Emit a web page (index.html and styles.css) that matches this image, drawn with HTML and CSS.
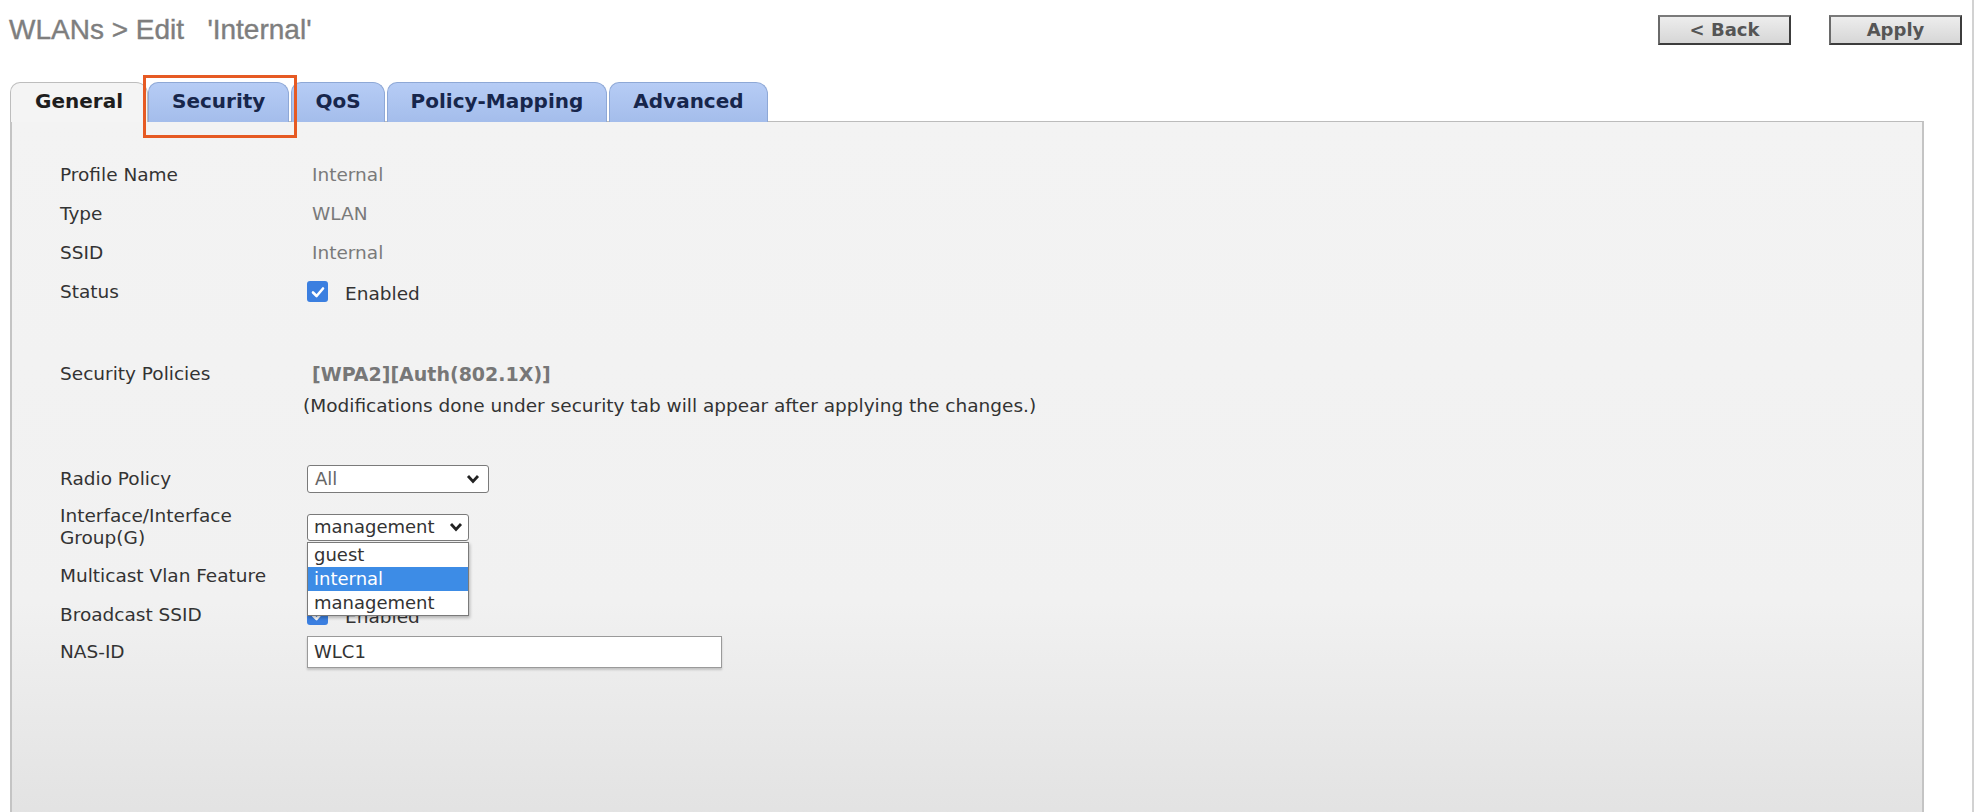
FILE: index.html
```html
<!DOCTYPE html>
<html lang="en">
<head>
<meta charset="utf-8">
<title>WLANs &gt; Edit 'Internal'</title>
<link rel="stylesheet" href="styles.css">
</head>
<body>
<div class="frame">
  <header class="topbar">
    <h1 class="title">WLANs &gt; Edit&nbsp;&nbsp; 'Internal'</h1>
    <div class="actions">
      <button class="btn" type="button">&lt; Back</button>
      <button class="btn" type="button">Apply</button>
    </div>
  </header>

  <nav class="tabs">
    <div class="tab tab-active">General</div>
    <div class="tab">Security</div>
    <div class="tab">QoS</div>
    <div class="tab">Policy-Mapping</div>
    <div class="tab">Advanced</div>
  </nav>
  <div class="highlight"></div>

  <section class="panel">
    <div class="form">
      <div class="row"><div class="label">Profile Name</div><div class="value text-value">Internal</div></div>
      <div class="row"><div class="label">Type</div><div class="value text-value">WLAN</div></div>
      <div class="row"><div class="label">SSID</div><div class="value text-value">Internal</div></div>
      <div class="row"><div class="label">Status</div>
        <div class="value check-wrap"><span class="checkbox"><svg viewBox="0 0 20 20" width="20" height="20"><path d="M5 10.5 L8.6 14 L15 6.5" fill="none" stroke="#fff" stroke-width="2.6" stroke-linecap="round" stroke-linejoin="round"/></svg></span><span class="check-text">Enabled</span></div>
      </div>

      <div class="row row-sec"><div class="label">Security Policies</div><div class="value policy">[WPA2][Auth(802.1X)]</div></div>
      <div class="note">(Modifications done under security tab will appear after applying the changes.)</div>

      <div class="row row-radio"><div class="label">Radio Policy</div>
        <div class="value"><div class="select select-radio"><span class="sel-text muted">All</span><svg class="chev" viewBox="0 0 14 10" width="14" height="10"><path d="M2 2 L7 7.5 L12 2" fill="none" stroke="#222" stroke-width="2.8"/></svg></div></div>
      </div>
      <div class="row row-iface"><div class="label label-two">Interface/Interface<br>Group(G)</div>
        <div class="value">
          <div class="select-holder">
            <div class="select select-iface"><span class="sel-text">management</span><svg class="chev" viewBox="0 0 14 10" width="14" height="10"><path d="M2 2 L7 7.5 L12 2" fill="none" stroke="#222" stroke-width="2.8"/></svg></div>
            <ul class="listbox">
              <li class="opt">guest</li>
              <li class="opt opt-sel">internal</li>
              <li class="opt">management</li>
            </ul>
          </div>
        </div>
      </div>
      <div class="row"><div class="label">Multicast Vlan Feature</div>
        <div class="value check-wrap"><span class="checkbox checkbox-off"></span></div>
      </div>
      <div class="row"><div class="label">Broadcast SSID</div>
        <div class="value check-wrap"><span class="checkbox"><svg viewBox="0 0 20 20" width="20" height="20"><path d="M5 10.5 L8.6 14 L15 6.5" fill="none" stroke="#fff" stroke-width="2.6" stroke-linecap="round" stroke-linejoin="round"/></svg></span><span class="check-text">Enabled</span></div>
      </div>
      <div class="row row-nas"><div class="label">NAS-ID</div>
        <div class="value"><div class="textbox">WLC1</div></div>
      </div>
    </div>
  </section>
</div>
</body>
</html>
```

FILE: styles.css
```css
html, body {
  margin: 0;
  padding: 0;
  background: #ffffff;
  overflow: hidden;
}

.frame {
  position: relative;
  width: 1974px;
  height: 812px;
  box-sizing: border-box;
  border-right: 2px solid #d2d2d2;
  font-family: "DejaVu Sans", Verdana, sans-serif;
}

.topbar {
  display: flex;
  justify-content: space-between;
  align-items: flex-start;
  height: 82px;
}

.title {
  margin: 14px 0 0 9px;
  font-family: "Liberation Sans", Arial, sans-serif;
  font-weight: normal;
  font-size: 28px;
  line-height: 32px;
  color: #7e7e7e;
  white-space: pre;
  -webkit-text-stroke: 0.4px #7e7e7e;
}

.actions {
  display: flex;
  gap: 38px;
  margin: 15px 10px 0 0;
}

.btn {
  width: 133px;
  height: 30px;
  box-sizing: border-box;
  padding: 0;
  font-family: "DejaVu Sans", Verdana, sans-serif;
  font-weight: bold;
  font-size: 18px;
  line-height: 24px;
  color: #555555;
  background: linear-gradient(#ededed, #d6d6d6);
  border: 2px solid #3c3c3c;
  border-top-color: #7a7a7a;
  border-left-color: #6a6a6a;
  border-radius: 0;
}

.tabs {
  display: flex;
  align-items: flex-end;
  gap: 2px;
  height: 39px;
  padding-left: 10px;
}

.tab {
  position: relative;
  z-index: 1;
  box-sizing: border-box;
  padding: 0 23px 3px;
  display: flex;
  align-items: center;
  font-weight: bold;
  font-size: 20px;
  color: #17264c;
  background: linear-gradient(#b6ccf5, #a4bdeb);
  border: 1px solid #8ea8d6;
  border-bottom: none;
  border-radius: 10px 12px 0 0;
  margin-bottom: -1px;
  height: 40px;
}

.tab-active {
  color: #1e1e1e;
  background: #f4f4f4;
  border-color: #bdbdbd;
  padding: 0 24px 3px;
  margin-right: -2px;
}

.highlight {
  position: absolute;
  left: 143px;
  top: 75px;
  width: 154px;
  height: 63px;
  box-sizing: border-box;
  border: 3px solid #e65a23;
  z-index: 3;
  pointer-events: none;
}

.panel {
  margin-left: 10px;
  width: 1914px;
  height: 720px;
  box-sizing: border-box;
  border: 1px solid #bcbcbc;
  border-left: 2px solid #c4c4c4;
  border-right: 2px solid #c4c4c4;
  background: linear-gradient(#f3f3f3 0, #f1f1f1 480px, #e2e2e2 700px);
  padding: 33px 0 0 48px;
}

.form {
  display: flex;
  flex-direction: column;
}

.row {
  display: grid;
  grid-template-columns: 247px 1fr;
  align-items: center;
  min-height: 39px;
}

.label {
  font-size: 18.5px;
  line-height: 22px;
  color: #333333;
}

.value {
  font-size: 18.5px;
  line-height: 22px;
  color: #7a7a7a;
}

.text-value {
  padding-left: 5px;
}

.row-sec {
  margin-top: 43px;
}

.policy {
  font-weight: bold;
  font-size: 19px;
  color: #777777;
  padding-left: 5px;
}

.note {
  height: 25px;
  line-height: 25px;
  font-size: 18.5px;
  color: #333333;
  padding-left: 243px;
}

.row-radio {
  margin-top: 41px;
}

.row-iface {
  min-height: 58px;
}

.row-nas {
  min-height: 35px;
}

.check-wrap {
  display: flex;
  align-items: center;
  color: #333333;
}

.checkbox {
  width: 21px;
  height: 21px;
  box-sizing: border-box;
  border-radius: 3px;
  background: #3b7fe0;
  display: flex;
  align-items: center;
  justify-content: center;
  margin-right: 17px;
}

.checkbox-off {
  background: #ffffff;
  border: 1px solid #767676;
}

.check-text {
  padding-top: 4px;
}

.select {
  display: flex;
  align-items: center;
  justify-content: space-between;
  box-sizing: border-box;
  height: 28px;
  padding: 0 8px 0 7px;
  background: #ffffff;
  border: 1px solid #7a7a7a;
  border-radius: 3px;
  color: #333333;
}

.select-radio {
  width: 182px;
}

.select-iface {
  width: 162px;
  height: 27px;
  padding: 0 5px 0 6px;
}

.sel-text {
  font-size: 18px;
}

.muted {
  color: #666666;
}

.chev {
  display: block;
}

.select-holder {
  position: relative;
  width: 162px;
}

.listbox {
  position: absolute;
  left: 0;
  top: 28px;
  z-index: 2;
  width: 162px;
  box-sizing: border-box;
  margin: 0;
  padding: 0;
  list-style: none;
  background: #ffffff;
  border: 1px solid #7a7a7a;
  box-shadow: 1px 2px 3px rgba(0, 0, 0, 0.25);
}

.opt {
  height: 24px;
  line-height: 24px;
  padding-left: 6px;
  font-size: 18px;
  color: #333333;
}

.opt-sel {
  background: #3d8ce6;
  color: #ffffff;
}

.textbox {
  width: 415px;
  height: 32px;
  box-sizing: border-box;
  padding: 0 6px;
  line-height: 30px;
  background: #ffffff;
  border: 1px solid #9a9a9a;
  box-shadow: 0 2px 2px rgba(0, 0, 0, 0.18);
  font-size: 18px;
  color: #333333;
}
```
